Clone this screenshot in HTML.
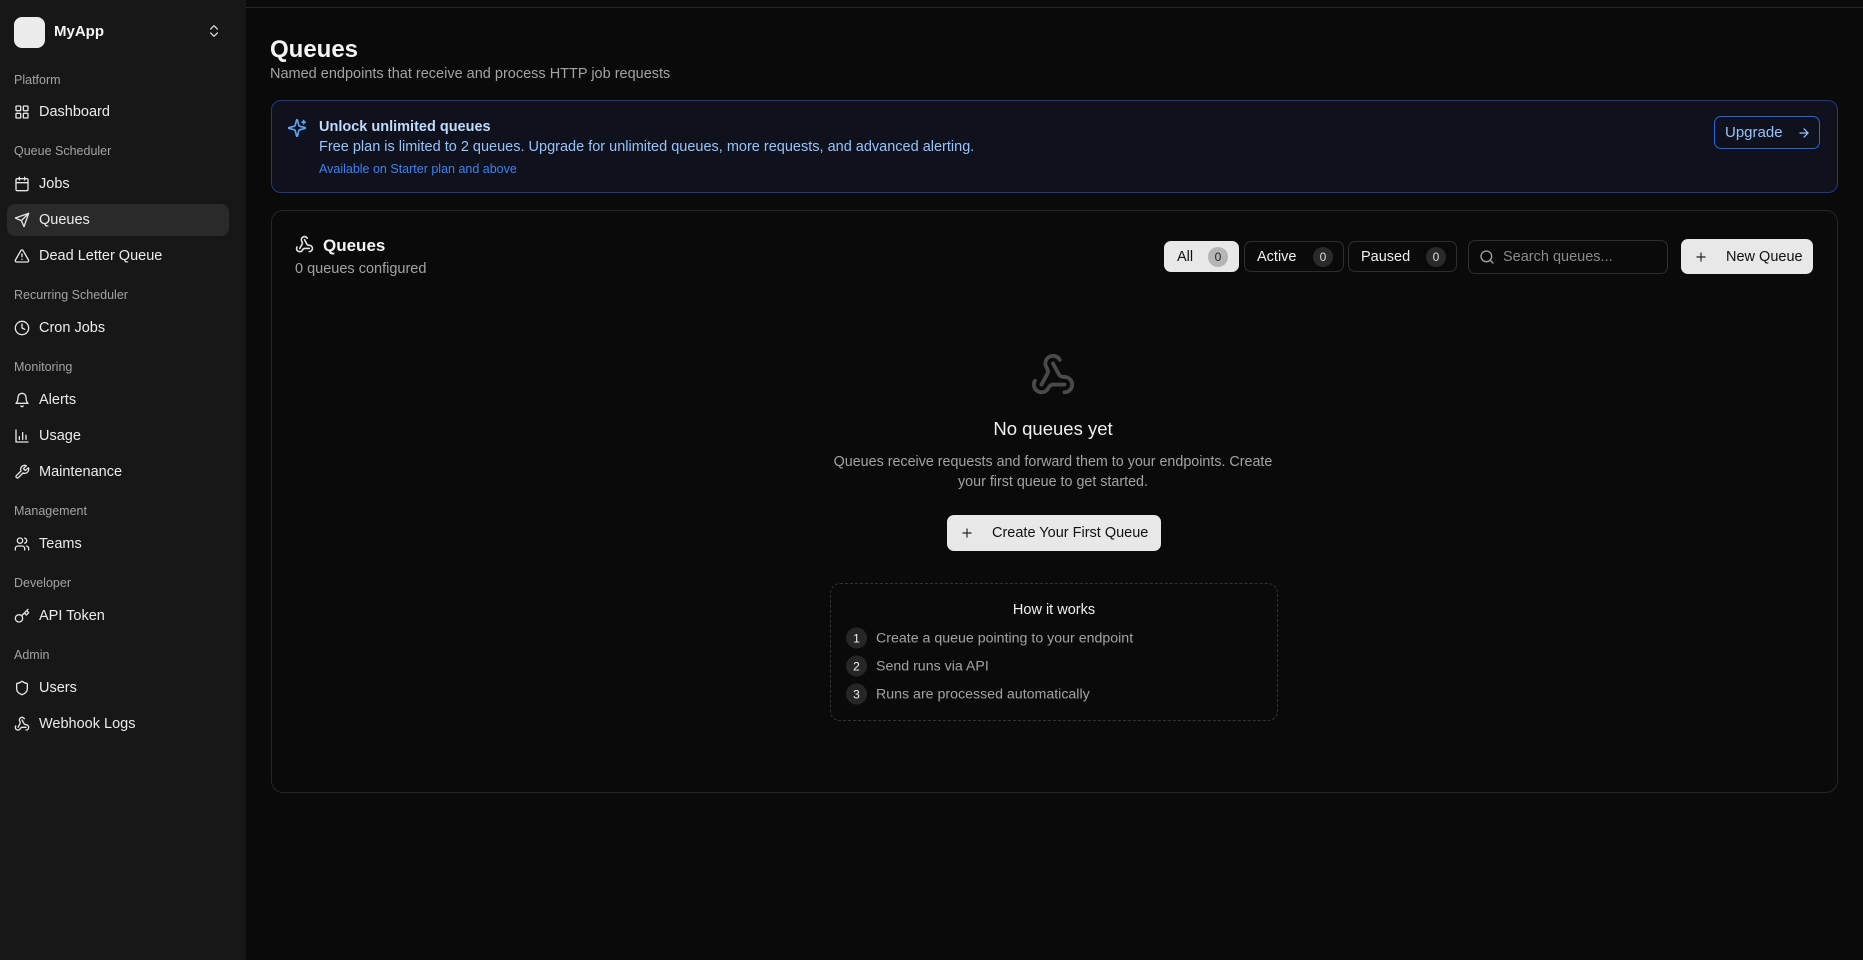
<!DOCTYPE html>
<html><head><meta charset="utf-8"><style>
*{margin:0;padding:0;box-sizing:border-box}
body{width:1863px;height:960px;background:#0a0a0a;font-family:"Liberation Sans",sans-serif;color:#fafafa;position:relative;overflow:hidden}
.a{position:absolute}
.sb{left:0;top:0;width:246px;height:960px;background:#171717}
.lbl{position:absolute;left:14px;font-size:12.5px;color:#a3a3a3;transform:translateY(-50%)}
.it{position:absolute;left:14px;font-size:14.5px;color:#ececec;transform:translateY(-50%);display:flex;align-items:center;gap:9px}
.it svg{width:16px;height:16px;fill:none;stroke:#e5e5e5;stroke-width:2;stroke-linecap:round;stroke-linejoin:round}
.tab{position:absolute;top:241px;height:31px;border:1px solid #2e2e2e;border-radius:7px;display:flex;align-items:center;font-size:14.5px;padding-left:12px;color:#f0f0f0}
.bd{width:20px;height:20px;border-radius:10px;background:#2a2a2a;font-size:12px;display:flex;align-items:center;justify-content:center;margin-left:auto;margin-right:10px;color:#ddd}
.step{position:absolute;left:846px;display:flex;align-items:center;gap:9px;font-size:14.2px;color:#a3a3a3;transform:translateY(-50%)}
.num{width:21px;height:21px;border-radius:11px;background:#262626;color:#eee;font-size:12px;display:flex;align-items:center;justify-content:center}
</style></head><body>
<div class="a sb"></div>
<div class="a" style="left:246px;top:7px;width:1617px;height:1px;background:#262626"></div>
<div class="a" style="left:14px;top:17px;width:31px;height:31px;border-radius:8px;background:#ececec"></div>
<div class="a" style="left:54px;top:23px;font-size:15px;font-weight:bold;color:#f5f5f5">MyApp</div>
<svg class="a" style="left:206px;top:23px" width="16" height="16" viewBox="0 0 24 24" fill="none" stroke="#d4d4d4" stroke-width="2" stroke-linecap="round" stroke-linejoin="round"><path d="m7 15 5 5 5-5M7 9l5-5 5 5"/></svg>

<div class="lbl" style="top:80px">Platform</div>
<div class="it" style="top:112px"><svg viewBox="0 0 24 24"><rect x="3" y="3" width="7" height="7" rx="1"/><rect x="14" y="3" width="7" height="7" rx="1"/><rect x="3" y="14" width="7" height="7" rx="1"/><rect x="14" y="14" width="7" height="7" rx="1"/></svg>Dashboard</div>
<div class="lbl" style="top:151px">Queue Scheduler</div>
<div class="it" style="top:184px"><svg viewBox="0 0 24 24"><rect x="3" y="4" width="18" height="18" rx="2"/><path d="M16 2v4M8 2v4M3 10h18"/></svg>Jobs</div>
<div class="a" style="left:7px;top:204px;width:222px;height:32px;border-radius:8px;background:#2a2a2a"></div>
<div class="it" style="top:220px"><svg viewBox="0 0 24 24"><path d="M22 2 11 13M22 2l-7 20-4-9-9-4z"/></svg>Queues</div>
<div class="it" style="top:256px"><svg viewBox="0 0 24 24"><path d="m21.7 18-8-14a2 2 0 0 0-3.5 0l-8 14A2 2 0 0 0 4 21h16a2 2 0 0 0 1.7-3zM12 9v4M12 17h.01"/></svg>Dead Letter Queue</div>
<div class="lbl" style="top:295px">Recurring Scheduler</div>
<div class="it" style="top:328px"><svg viewBox="0 0 24 24"><circle cx="12" cy="12" r="10"/><path d="M12 6v6l4 2"/></svg>Cron Jobs</div>
<div class="lbl" style="top:367px">Monitoring</div>
<div class="it" style="top:400px"><svg viewBox="0 0 24 24"><path d="M6 8a6 6 0 0 1 12 0c0 7 3 9 3 9H3s3-2 3-9M10.3 21a1.94 1.94 0 0 0 3.4 0"/></svg>Alerts</div>
<div class="it" style="top:436px"><svg viewBox="0 0 24 24"><path d="M3 3v18h18M8 17v-4M13 17V7M18 17v-6"/></svg>Usage</div>
<div class="it" style="top:472px"><svg viewBox="0 0 24 24"><path d="M14.7 6.3a1 1 0 0 0 0 1.4l1.6 1.6a1 1 0 0 0 1.4 0l3.77-3.77a6 6 0 0 1-7.94 7.94l-6.91 6.91a2.12 2.12 0 0 1-3-3l6.91-6.91a6 6 0 0 1 7.94-7.94z"/></svg>Maintenance</div>
<div class="lbl" style="top:511px">Management</div>
<div class="it" style="top:544px"><svg viewBox="0 0 24 24"><path d="M16 21v-2a4 4 0 0 0-4-4H6a4 4 0 0 0-4 4v2"/><circle cx="9" cy="7" r="4"/><path d="M22 21v-2a4 4 0 0 0-3-3.87M16 3.13a4 4 0 0 1 0 7.75"/></svg>Teams</div>
<div class="lbl" style="top:583px">Developer</div>
<div class="it" style="top:616px"><svg viewBox="0 0 24 24"><circle cx="7.5" cy="15.5" r="5.5"/><path d="m21 2-9.6 9.6M15.5 7.5l3 3L22 7l-3-3"/></svg>API Token</div>
<div class="lbl" style="top:655px">Admin</div>
<div class="it" style="top:688px"><svg viewBox="0 0 24 24"><path d="M20 13c0 5-3.5 7.5-7.66 8.95a1 1 0 0 1-.67-.01C7.5 20.5 4 18 4 13V6a1 1 0 0 1 1-1c2 0 4.5-1.2 6.24-2.72a1.17 1.17 0 0 1 1.52 0C14.51 3.81 17 5 19 5a1 1 0 0 1 1 1z"/></svg>Users</div>
<div class="it" style="top:724px"><svg viewBox="0 0 24 24"><path d="M18 16.98h-5.99c-1.1 0-1.95.94-2.48 1.9A4 4 0 0 1 2 17c.01-.7.2-1.4.57-2M6 17l3.13-5.78c.53-.97.1-2.18-.5-3.1a4 4 0 1 1 6.89-4.06M12 6l3.13 5.73C15.66 12.7 16.9 13 18 13a4 4 0 0 1 0 8"/></svg>Webhook Logs</div>

<div class="a" style="left:270px;top:36px;font-size:24px;font-weight:bold;color:#f5f5f5">Queues</div>
<div class="a" style="left:270px;top:66px;font-size:14.5px;color:#a3a3a3">Named endpoints that receive and process HTTP job requests</div>

<div class="a" style="left:271px;top:100px;width:1567px;height:93px;border:1px solid #1e3a8a;border-radius:10px;background:#0f111c"></div>
<svg class="a" style="left:287px;top:118px" width="20" height="20" viewBox="0 0 24 24" fill="none" stroke="#60a5fa" stroke-width="2" stroke-linecap="round" stroke-linejoin="round"><path d="M9.94 15.5A2 2 0 0 0 8.5 14.06l-6.14-1.58a.5.5 0 0 1 0-.96L8.5 9.94A2 2 0 0 0 9.94 8.5l1.58-6.14a.5.5 0 0 1 .96 0L14.06 8.5A2 2 0 0 0 15.5 9.94l6.14 1.58a.5.5 0 0 1 0 .96L15.5 14.06a2 2 0 0 0-1.44 1.44l-1.58 6.14a.5.5 0 0 1-.96 0zM20 3v4M22 5h-4"/></svg>
<div class="a" style="left:319px;top:119px;font-size:14.5px;font-weight:bold;color:#bfdbfe">Unlock unlimited queues</div>
<div class="a" style="left:319px;top:139px;font-size:14.5px;color:#93c5fd">Free plan is limited to 2 queues. Upgrade for unlimited queues, more requests, and advanced alerting.</div>
<div class="a" style="left:319px;top:162px;font-size:12.5px;color:#3b82f6">Available on Starter plan and above</div>
<div class="a" style="left:1714px;top:116px;width:106px;height:33px;border:1px solid #2563eb;border-radius:7px;display:flex;align-items:center;padding-left:10px;font-size:15px;color:#93c5fd">Upgrade<svg style="margin-left:14px" width="14" height="14" viewBox="0 0 24 24" fill="none" stroke="#93c5fd" stroke-width="2" stroke-linecap="round"><path d="M5 12h14M12 5l7 7-7 7"/></svg></div>

<div class="a" style="left:271px;top:210px;width:1567px;height:583px;border:1px solid #262626;border-radius:12px"></div>
<svg class="a" style="left:295px;top:235px" width="19" height="19" viewBox="0 0 24 24" fill="none" stroke="#e5e5e5" stroke-width="2" stroke-linecap="round" stroke-linejoin="round"><path d="M18 16.98h-5.99c-1.1 0-1.95.94-2.48 1.9A4 4 0 0 1 2 17c.01-.7.2-1.4.57-2M6 17l3.13-5.78c.53-.97.1-2.18-.5-3.1a4 4 0 1 1 6.89-4.06M12 6l3.13 5.73C15.66 12.7 16.9 13 18 13a4 4 0 0 1 0 8"/></svg>
<div class="a" style="left:323px;top:236px;font-size:17px;font-weight:bold;color:#f5f5f5">Queues</div>
<div class="a" style="left:295px;top:261px;font-size:14.5px;color:#a3a3a3">0 queues configured</div>

<div class="tab" style="left:1164px;width:75px;background:#e8e8e8;border-color:#e8e8e8;color:#111">All<div class="bd" style="background:#b5b5b5;color:#222">0</div></div>
<div class="tab" style="left:1244px;width:100px">Active<div class="bd">0</div></div>
<div class="tab" style="left:1348px;width:109px">Paused<div class="bd">0</div></div>
<div class="a" style="left:1468px;top:240px;width:200px;height:34px;border:1px solid #2e2e2e;border-radius:7px;display:flex;align-items:center;padding-left:10px;font-size:14.5px;color:#8a8a8a"><svg width="16" height="16" viewBox="0 0 24 24" fill="none" stroke="#a3a3a3" stroke-width="2" stroke-linecap="round"><circle cx="11" cy="11" r="8"/><path d="m21 21-4.3-4.3"/></svg><span style="margin-left:8px">Search queues...</span></div>
<div class="a" style="left:1681px;top:239px;width:132px;height:35px;border-radius:7px;background:#e8e8e8;display:flex;align-items:center;padding-left:13px;font-size:14.5px;color:#111"><svg width="14" height="14" viewBox="0 0 24 24" fill="none" stroke="#222" stroke-width="2" stroke-linecap="round"><path d="M5 12h14M12 5v14"/></svg><span style="margin-left:18px">New Queue</span></div>

<svg class="a" style="left:1030px;top:352px" width="46" height="46" viewBox="0 0 24 24" fill="none" stroke="#4a4a4a" stroke-width="2" stroke-linecap="round" stroke-linejoin="round"><path d="M18 16.98h-5.99c-1.1 0-1.95.94-2.48 1.9A4 4 0 0 1 2 17c.01-.7.2-1.4.57-2M6 17l3.13-5.78c.53-.97.1-2.18-.5-3.1a4 4 0 1 1 6.89-4.06M12 6l3.13 5.73C15.66 12.7 16.9 13 18 13a4 4 0 0 1 0 8"/></svg>
<div class="a" style="left:853px;width:400px;top:418px;text-align:center;font-size:18.5px;color:#f0f0f0">No queues yet</div>
<div class="a" style="left:823px;width:460px;top:452px;text-align:center;font-size:14.3px;line-height:20px;color:#a3a3a3">Queues receive requests and forward them to your endpoints. Create your first queue to get started.</div>
<div class="a" style="left:947px;top:515px;width:214px;height:36px;border-radius:7px;background:#e8e8e8;display:flex;align-items:center;padding-left:13px;font-size:14.5px;color:#111"><svg width="14" height="14" viewBox="0 0 24 24" fill="none" stroke="#222" stroke-width="2" stroke-linecap="round"><path d="M5 12h14M12 5v14"/></svg><span style="margin-left:18px">Create Your First Queue</span></div>

<div class="a" style="left:830px;top:583px;width:448px;height:138px;border:1px dashed #333;border-radius:10px"></div>
<div class="a" style="left:830px;width:448px;top:602px;text-align:center;font-size:14.5px;color:#f0f0f0">How it works</div>
<div class="step" style="top:638px"><div class="num">1</div>Create a queue pointing to your endpoint</div>
<div class="step" style="top:666px"><div class="num">2</div>Send runs via API</div>
<div class="step" style="top:694px"><div class="num">3</div>Runs are processed automatically</div>
</body></html>
